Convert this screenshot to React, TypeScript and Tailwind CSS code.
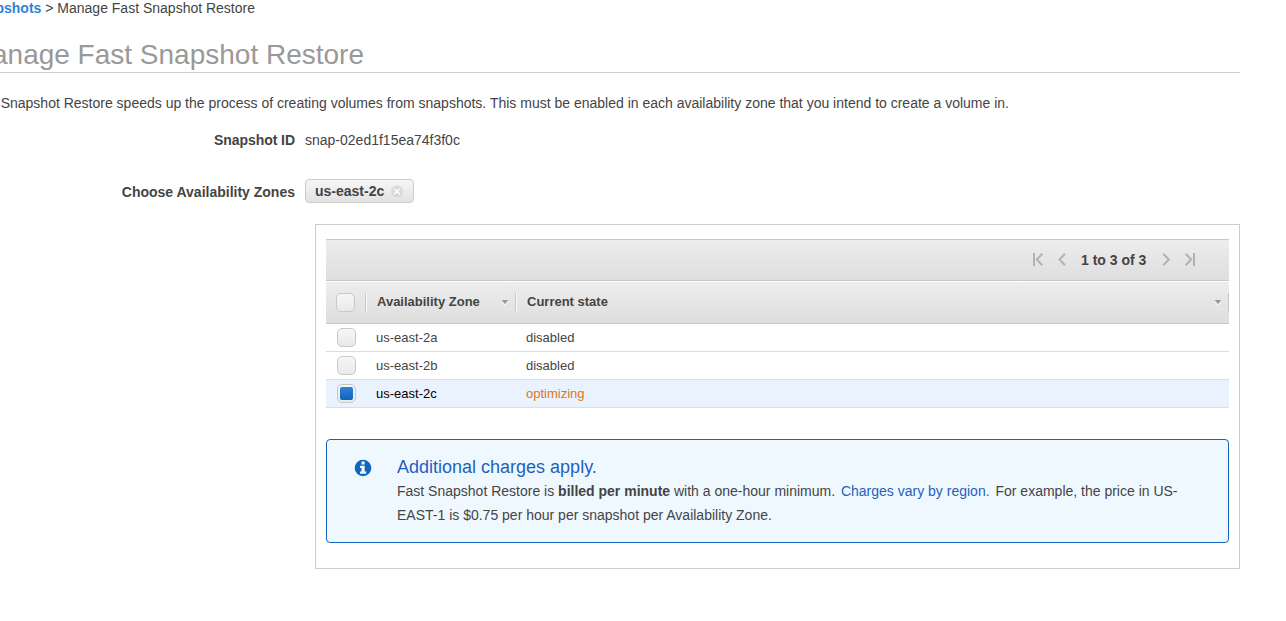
import { ReactNode } from "react";

const zones = [
  { name: "us-east-2a", state: "disabled", selected: false },
  { name: "us-east-2b", state: "disabled", selected: false },
  { name: "us-east-2c", state: "optimizing", selected: true },
];

function Checkbox({ checked = false }: { checked?: boolean }) {
  return (
    <span className="flex size-[19px] shrink-0 items-center justify-center rounded-[5px] border border-[#c8c8c8] bg-linear-to-b from-[#f6f6f6] to-[#e9e9e9]">
      {checked && <span className="size-[13px] rounded-[2px] bg-linear-to-b from-[#2d82d8] to-[#1463b8]" />}
    </span>
  );
}

function PageIcon({ children, className }: { children: ReactNode; className: string }) {
  return (
    <svg className={className} viewBox="0 0 11 14" width="11" height="14" fill="none" stroke="#b2b2b2" strokeWidth="2">
      {children}
    </svg>
  );
}

function Caret() {
  return (
    <svg width="8" height="6" viewBox="0 0 8 6" className="mt-px shrink-0">
      <path d="M0.5 1h7L4 5.5z" fill="#fff" />
      <path d="M0.5 0h7L4 4.3z" fill="#999" />
    </svg>
  );
}

export default function App() {
  return (
    <div className="h-[621px] w-full overflow-hidden bg-white font-['Liberation_Sans',Arial,sans-serif] text-[14px] text-[#444]">
      <nav className="flex h-[17px] w-[255px] justify-end leading-[17px] whitespace-pre">
        <a className="font-bold text-[#2e82d8]">Snapshots</a>
        <span> &gt; Manage Fast Snapshot Restore</span>
      </nav>
      <header className="mt-[19px] h-[37px] w-[1240px] border-b border-[#ccc]">
        <h1 className="flex w-[364px] justify-end text-[28px] leading-[37px] whitespace-nowrap text-[#999]">
          Manage Fast Snapshot Restore
        </h1>
      </header>
      <p className="mt-[20px] flex h-[20px] w-[1009px] justify-end leading-[20px] whitespace-nowrap">
        Fast Snapshot Restore speeds up the process of creating volumes from snapshots. This must be enabled in each
        availability zone that you intend to create a volume in.
      </p>
      <div className="mt-[17px] flex h-[20px] gap-[10px] leading-[20px]">
        <span className="w-[295px] text-right font-bold tracking-[-0.05px]">Snapshot ID</span>
        <span>snap-02ed1f15ea74f3f0c</span>
      </div>
      <div className="mt-[29px] flex h-[24px] gap-[10px]">
        <span className="w-[295px] text-right leading-[26px] font-bold">Choose Availability Zones</span>
        <span className="flex w-[109px] items-center rounded-[4px] border border-[#ccc] bg-linear-to-b from-[#f6f6f6] to-[#e2e2e2] pl-[9px]">
          <b className="w-[75px] leading-[22px]">us-east-2c</b>
          <svg width="13" height="13" viewBox="0 0 13 13">
            <circle cx="7" cy="6.5" r="6" fill="#d9d9d9" />
            <path d="M4.2 3.7l5.6 5.6M9.8 3.7l-5.6 5.6" stroke="#fff" strokeWidth="1.4" />
          </svg>
        </span>
      </div>

      <main className="mt-[21px] ml-[315px] h-[345px] w-[925px] border border-[#ccc] px-[10px] pt-[14px]">
        <div className="flex h-[42px] items-center border-y border-[#c8c8c8] bg-linear-to-b from-[#ededed] to-[#dedede] pr-[33px]">
          <div className="ml-auto flex items-center">
            <PageIcon className="mr-[14px]">
              <path d="M2 0v13M10.3 0.7L4.8 6.5l5.5 5.8" />
            </PageIcon>
            <PageIcon className="mr-[13px]">
              <path d="M8 0.7L2.5 6.5 8 12.3" />
            </PageIcon>
            <b className="w-[66px] leading-[20px] whitespace-nowrap">1 to 3 of 3</b>
            <PageIcon className="mr-[12px] ml-[15px]">
              <path d="M1.3 0.7l5.5 5.8-5.5 5.8" />
            </PageIcon>
            <PageIcon className="">
              <path d="M0.7 0.7l5.5 5.8-5.5 5.8M9 0v13" />
            </PageIcon>
          </div>
        </div>
        <div className="flex h-[43px] items-center border-t border-b border-t-white border-b-[#c8c8c8] bg-linear-to-b from-[#ededed] to-[#dedede] text-[13px] font-bold">
          <div className="flex h-[19px] w-[39px] pl-[10px]">
            <Checkbox />
          </div>
          <div className="flex h-[19px] w-[150px] items-center justify-between border-l border-[#c8c8c8] pr-[6px] pl-[11px] shadow-[inset_1px_0_0_#f8f8f8]">
            <span className="mb-[2px] leading-[19px]">Availability Zone</span>
            <Caret />
          </div>
          <div className="flex h-[19px] flex-1 items-center justify-between border-x border-[#c8c8c8] pr-[6px] pl-[11px] shadow-[inset_1px_0_0_#f8f8f8]">
            <span className="mb-[2px] leading-[19px]">Current state</span>
            <Caret />
          </div>
        </div>
        {zones.map((zone) => (
          <div
            key={zone.name}
            className={
              zone.selected
                ? "flex h-[28px] items-center border-b border-[#ddd] bg-[#eaf2fe] pl-[11px] text-[13px] text-black"
                : "flex h-[28px] items-center border-b border-[#ddd] pl-[11px] text-[13px]"
            }
          >
            <Checkbox checked={zone.selected} />
            <span className="ml-[20px] w-[150px]">{zone.name}</span>
            <span className={zone.selected ? "text-[#dc7612]" : ""}>{zone.state}</span>
          </div>
        ))}
        <section className="mt-[31px] flex h-[104px] rounded-[4px] border border-[#1166bb] bg-[#f0f8ff] pt-[15px] pl-[27px]">
          <svg className="mt-[4px] shrink-0" width="18" height="18" viewBox="-0.5 -0.5 18 18">
            <circle cx="8.5" cy="8.5" r="8.3" fill="#1166bb" />
            <path d="M7 2h3.2v3H7zM5.5 6.3h4.7V12h1.5v2.2H5.5V12H7V8.5H5.5z" fill="#f0f8ff" />
          </svg>
          <div className="ml-[25px]">
            <h2 className="h-[24px] text-[18px] leading-[24px] text-[#1f60bd]">Additional charges apply.</h2>
            <p className="leading-[24px] whitespace-nowrap">
              Fast Snapshot Restore is <b>billed per minute</b> with a one-hour minimum.{" "}
              <a className="mx-[2px] text-[#1f60bd]">Charges vary by region.</a> For example, the price in US-
              <br />
              EAST-1 is $0.75 per hour per snapshot per Availability Zone.
            </p>
          </div>
        </section>
      </main>
    </div>
  );
}
